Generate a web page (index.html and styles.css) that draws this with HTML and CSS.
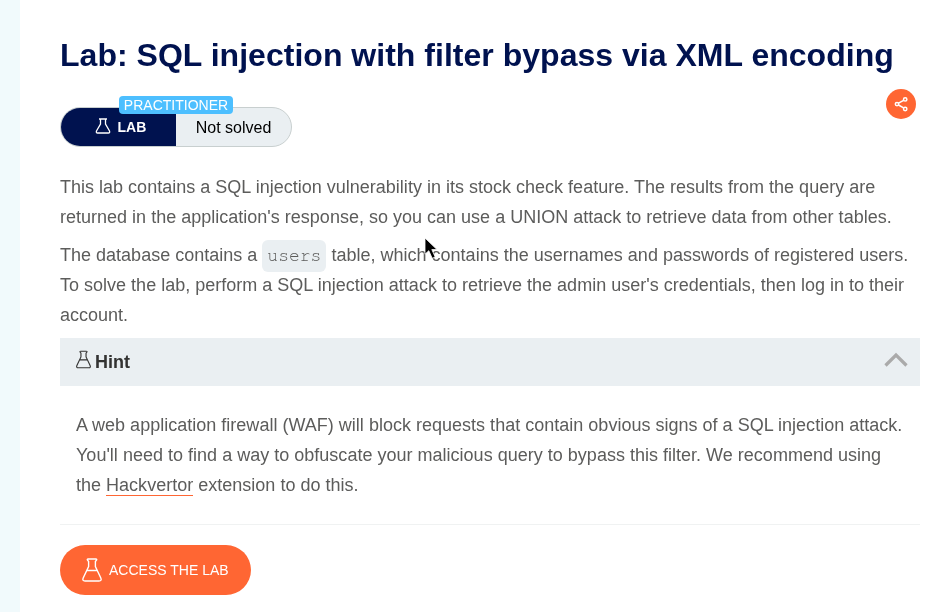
FILE: index.html
```html
<!DOCTYPE html>
<html lang="en">
<head>
<meta charset="utf-8">
<title>Lab: SQL injection with filter bypass via XML encoding</title>
<link rel="stylesheet" href="styles.css">
</head>
<body>
<main class="page">
  <h1>Lab: SQL injection with filter bypass via XML encoding</h1>
  <div class="meta">
    <div class="status">
      <span class="kind">
        <svg class="flask-small" width="16" height="16" viewBox="0 0 16 16"><path d="M4 1H12M5.5 1V6L1.5 13Q.8 15 2.6 15H13.4Q15.2 15 14.5 13L10.5 6V1"/></svg>
        LAB
      </span>
      <span class="state">Not solved</span>
      <span class="level">PRACTITIONER</span>
    </div>
    <a class="share" aria-label="Share">
      <svg width="30" height="30" viewBox="0 0 30 30"><path d="M12.5 14.2L17.6 11.4M12.5 16L17.6 18.9"/><circle cx="11" cy="15.1" r="1.7"/><circle cx="19.2" cy="10.4" r="1.7"/><circle cx="19.2" cy="20" r="1.7"/></svg>
    </a>
  </div>
  <p>This lab contains a SQL injection vulnerability in its stock check feature. The results from the query are returned in the application's response, so you can use a UNION attack to retrieve data from other tables.</p>
  <p>The database contains a <code>users</code> table, which contains the usernames and passwords of registered users. To solve the lab, perform a SQL injection attack to retrieve the admin user's credentials, then log in to their account.</p>
  <section class="hint">
    <header>
      <svg class="flask-hint" width="15" height="19" viewBox="0 0 20 24"><path d="M6 1H14Q15 1 14.6 2L13.4 3.5V8.5L18.8 20Q20 23 17 23H3Q0 23 1.2 20L6.6 8.5V3.5L5.4 2Q5 1 6 1ZM4.8 12.5H15.2"/></svg>
      <h2>Hint</h2>
      <svg class="chevron" width="24" height="16" viewBox="0 0 24 16"><path d="M1.5 13.5L12 3L22.5 13.5"/></svg>
    </header>
    <p>A web application firewall (WAF) will block requests that contain obvious signs of a SQL injection attack. You'll need to find a way to obfuscate your malicious query to bypass this filter. We recommend using the <a class="link">Hackvertor</a> extension to do this.</p>
  </section>
  <a class="access">
    <svg class="flask-large" width="20" height="24" viewBox="0 0 20 24"><path d="M6 1H14Q15 1 14.6 2L13.4 3.5V8.5L18.8 20Q20 23 17 23H3Q0 23 1.2 20L6.6 8.5V3.5L5.4 2Q5 1 6 1ZM4.8 12.5H15.2"/></svg>
    ACCESS THE LAB
  </a>
</main>
<svg class="cursor" width="18" height="24" viewBox="0 0 18 24"><path d="M1 1V17.2L4.8 13.7L8.2 21.3L11.2 20L7.8 12.6H13Z"/></svg>
</body>
</html>
```

FILE: styles.css
```css
* { box-sizing: border-box; }
body {
  margin: 0;
  height: 612px;
  overflow: hidden;
  border-left: 20px solid #f1fafc;
  background: #fff;
  color: #5c5c5b;
  font: 18px/30px "Liberation Sans", Arial, sans-serif;
  letter-spacing: .008px;
}
svg { fill: none; stroke: currentColor; flex: none; }
.page { padding: 35px 22px 0 40px; will-change: transform; }
h1 { margin: 0; color: #00124f; font-size: 32px; line-height: 40px; letter-spacing: .02px; white-space: nowrap; }
.meta { display: flex; justify-content: space-between; align-items: flex-start; padding: 14px 4px 0 0; height: 97px; }
.status {
  position: relative;
  display: flex;
  width: 232px;
  height: 40px;
  margin-top: 18px;
  border: 1px solid #c8cfcf;
  border-radius: 20px;
  background: #eaeff2;
  line-height: 38px;
}
.kind {
  display: flex;
  align-items: center;
  gap: 6.5px;
  width: 115px;
  padding-left: 34px;
  border-radius: 19px 0 0 19px;
  background: #00124f;
  color: #fff;
  font-size: 14px;
  font-weight: bold;
}
.flask-small { stroke-width: 1.3; margin-top: -2px; }
.state { flex: 1; color: #000; font-size: 16px; line-height: 40px; text-align: center; }
.level {
  position: absolute;
  left: 58px;
  top: -12px;
  width: 114px;
  height: 18px;
  border-radius: 4px;
  background: #4dbfff;
  color: #fff;
  font-size: 14px;
  line-height: 18px;
  text-align: center;
}
.share { width: 30px; height: 30px; border-radius: 50%; background: #ff6633; color: #fff; }
.share svg { display: block; stroke-width: 1.5; }
p { margin: 0 0 8px; }
code {
  padding: 7px 5px;
  border-radius: 6px;
  background: #eaeff2;
  font: 18px "Courier 10 Pitch", FreeMono, "Nimbus Mono PS", "Liberation Mono", monospace;
}
.hint { width: 860px; height: 187px; border-bottom: 1px solid #f0f2f2; }
.hint header { display: flex; align-items: center; height: 48px; padding: 0 12px 0 16px; background: #eaeff2; color: #333332; }
.hint h2 { margin: 0 auto 0 4px; font-size: 18px; }
.flask-hint { stroke-width: 1.5; margin-top: -5px; }
.chevron { color: #aaa; stroke-width: 3.2; margin-top: -5px; }
.hint p { margin: 0; padding: 24px 16px 0; letter-spacing: .012px; }
.link { border-bottom: 1px solid #ff6633; }
.access {
  display: flex;
  align-items: center;
  gap: 7px;
  width: 191px;
  height: 50px;
  margin-top: 20px;
  padding-left: 22px;
  border-radius: 25px;
  background: #ff6633;
  color: #fff;
  font-size: 14px;
}
.flask-large { stroke-width: 1.4; }
.cursor { position: absolute; left: 424px; top: 237px; fill: #000; stroke: #fff; stroke-width: .8; }
```
